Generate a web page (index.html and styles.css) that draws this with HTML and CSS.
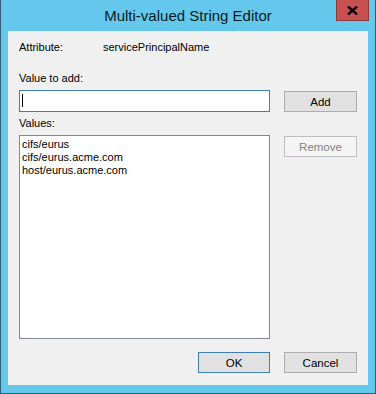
FILE: index.html
```html
<!DOCTYPE html>
<html lang="en">
<head>
<meta charset="UTF-8" />
<title>Multi-valued String Editor</title>
<link rel="stylesheet" href="styles.css">
</head>
<body>

<div class="window">
  <div class="titlebar">
    <span class="title">Multi-valued String Editor</span>
    <div class="close">
      <svg width="11" height="9" viewBox="0 0 11 9">
        <path d="M1 0.5 L10 8.5 M10 0.5 L1 8.5" stroke="#000" stroke-width="2.4" />
      </svg>
    </div>
  </div>

  <div class="client">
    <div class="attr-row">
      <span class="attr-label">Attribute:</span>
      <span>servicePrincipalName</span>
    </div>

    <div class="label add-label">Value to add:</div>
    <div class="row">
      <div class="textbox"><span class="caret"></span></div>
      <button class="btn side-btn">Add</button>
    </div>

    <div class="label values-label">Values:</div>
    <div class="row">
      <div class="listbox">
        <div class="item">cifs/eurus</div>
        <div class="item">cifs/eurus.acme.com</div>
        <div class="item">host/eurus.acme.com</div>
      </div>
      <button class="btn side-btn" disabled>Remove</button>
    </div>

    <div class="footer">
      <button class="btn default">OK</button>
      <button class="btn">Cancel</button>
    </div>
  </div>
</div>

</body>
</html>
```

FILE: styles.css
```css
body {
  margin: 0;
  font-family: "Liberation Sans", Arial, sans-serif;
  font-size: 11px;
  color: #000;
}
.window {
  position: relative;
  width: 374px;
  height: 393px;
  background: #63c8ec;
  border: 1px solid #2d5f78;
  border-top: none;
}
.titlebar {
  height: 31px;
  display: flex;
  justify-content: center;
  align-items: center;
}
.title {
  font-size: 15px;
  color: #0b1a20;
  margin-top: -1px;
}
.close {
  position: absolute;
  left: 335px;
  top: 0;
  width: 31px;
  height: 20px;
  background: #c75050;
  border: 1px solid #8a3a3a;
  border-top: none;
  display: flex;
  justify-content: center;
  align-items: center;
}
.client {
  margin-left: 7px;
  width: 338px;
  height: 344px;
  padding: 10px 11px 0 11px;
  background: #f0f0f0;
}
.attr-row {
  display: flex;
  line-height: 13px;
}
.attr-label {
  width: 84px;
}
.label {
  line-height: 13px;
}
.add-label {
  margin-top: 18px;
  margin-bottom: 5px;
}
.values-label {
  margin-top: 5px;
  margin-bottom: 5px;
}
.row {
  display: flex;
  gap: 14px;
  align-items: flex-start;
}
.textbox {
  box-sizing: border-box;
  width: 251px;
  height: 22px;
  background: #fff;
  border: 1px solid #3c7fb1;
  padding: 3px 0 0 2px;
}
.caret {
  display: block;
  width: 1px;
  height: 13px;
  background: #000;
}
.listbox {
  box-sizing: border-box;
  width: 251px;
  height: 204px;
  background: #fff;
  border: 1px solid #828790;
  padding: 2px 2px;
}
.item {
  line-height: 13px;
}
.btn {
  box-sizing: border-box;
  width: 73px;
  height: 21px;
  margin: 0;
  padding: 0;
  font-family: inherit;
  font-size: 11.5px;
  color: #000;
  background: #e1e1e1;
  border: 1px solid #adadad;
  border-radius: 0;
}
.side-btn {
  margin-top: 1px;
}
.btn:disabled {
  background: #f4f4f4;
  border-color: #bfbfbf;
  color: #838383;
}
.btn.default {
  width: 72px;
  border-color: #3c7fb1;
}
.footer {
  display: flex;
  justify-content: flex-end;
  gap: 14px;
  margin-top: 13px;
}
```
